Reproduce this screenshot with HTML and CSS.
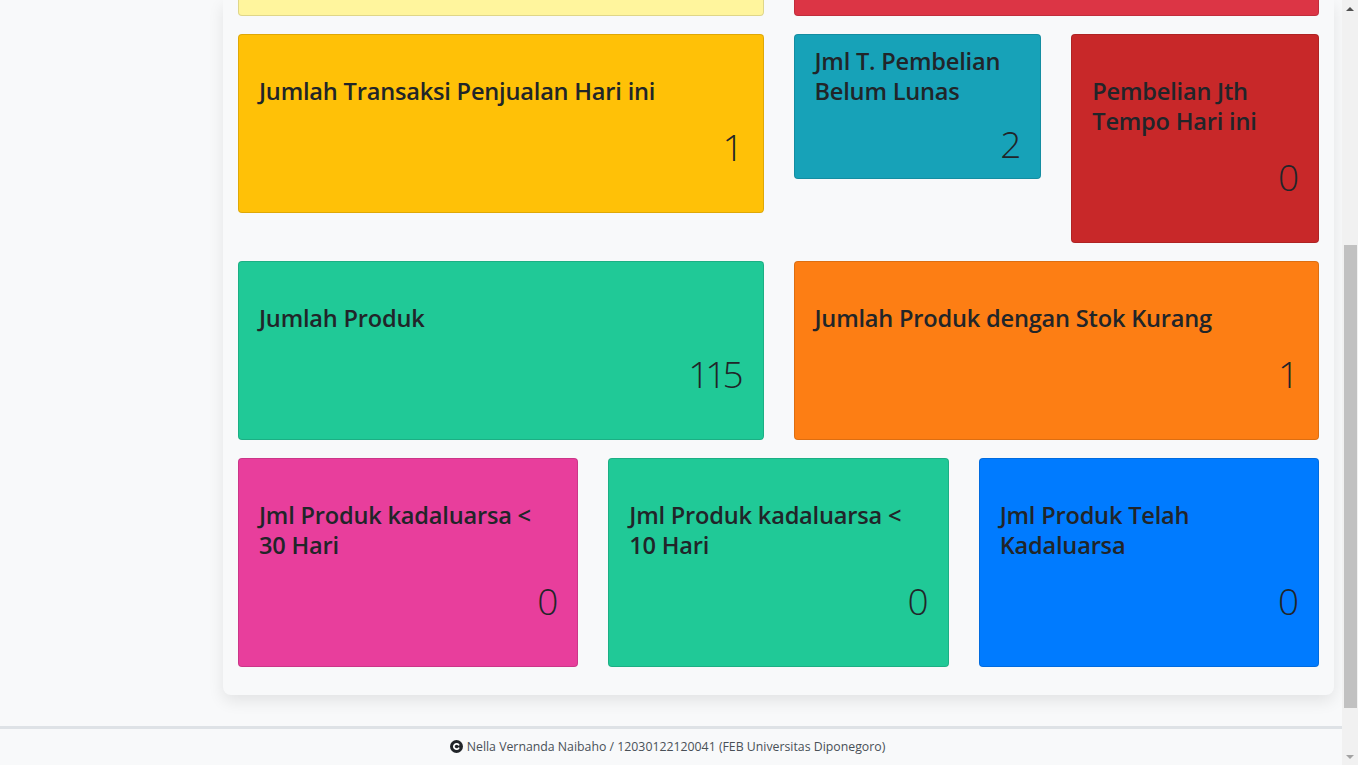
FILE: index.html
```html
<!DOCTYPE html>
<html lang="id">
<head>
<meta charset="utf-8">
<title>Dashboard</title>
<link rel="stylesheet" href="styles.css">
</head>
<body>
<div class="page">
  <div class="main">
    <div class="content">
      <aside class="sidebar"></aside>
      <section class="panel">
        <div class="row row-2">
          <div class="card stub bg-lightyellow"></div>
          <div class="card stub bg-danger"></div>
        </div>
        <div class="row row-2">
          <div class="card bg-warning">
            <h4 class="card-title">Jumlah Transaksi Penjualan Hari ini</h4>
            <div class="card-num">1</div>
          </div>
          <div class="row row-2 nested">
            <div class="card compact bg-info">
              <h4 class="card-title">Jml T. Pembelian Belum Lunas</h4>
              <div class="card-num">2</div>
            </div>
            <div class="card bg-red">
              <h4 class="card-title">Pembelian Jth Tempo Hari ini</h4>
              <div class="card-num">0</div>
            </div>
          </div>
        </div>
        <div class="row row-2">
          <div class="card bg-teal">
            <h4 class="card-title">Jumlah Produk</h4>
            <div class="card-num">115</div>
          </div>
          <div class="card bg-orange">
            <h4 class="card-title">Jumlah Produk dengan Stok Kurang</h4>
            <div class="card-num">1</div>
          </div>
        </div>
        <div class="row row-3">
          <div class="card bg-pink">
            <h4 class="card-title">Jml Produk kadaluarsa &lt; 30 Hari</h4>
            <div class="card-num">0</div>
          </div>
          <div class="card bg-teal">
            <h4 class="card-title">Jml Produk kadaluarsa &lt; 10 Hari</h4>
            <div class="card-num">0</div>
          </div>
          <div class="card bg-primary">
            <h4 class="card-title">Jml Produk Telah Kadaluarsa</h4>
            <div class="card-num">0</div>
          </div>
        </div>
      </section>
    </div>
    <footer class="footer">
      <svg class="copy-icon" width="13" height="13" viewBox="0 0 16 16" aria-hidden="true">
        <circle cx="8" cy="8" r="8" fill="#212529"/>
        <path d="M10.6 5.9 A3.3 3.3 0 1 0 10.6 10.1" fill="none" stroke="#fff" stroke-width="2.2" stroke-linecap="round"/>
      </svg>
      <span>Nella Vernanda Naibaho / 12030122120041 (FEB Universitas Diponegoro)</span>
    </footer>
  </div>
  <div class="scrollbar">
    <div class="sb-btn"><span class="tri-up"></span></div>
    <div class="sb-track"><div class="sb-thumb"></div></div>
    <div class="sb-btn"><span class="tri-down"></span></div>
  </div>
</div>
</body>
</html>
```

FILE: styles.css
```css
* { box-sizing: border-box; }
html, body { margin: 0; padding: 0; }
body {
  background: #f8f9fa;
  font-family: "Open Sans", "Noto Sans", "Liberation Sans", sans-serif;
  color: #212529;
  overflow: hidden;
}
.page {
  display: flex;
  width: 1358px;
  height: 765px;
}
.main {
  flex: 1;
  display: flex;
  flex-direction: column;
  min-width: 0;
}
.content {
  display: flex;
  align-items: flex-start;
  margin-bottom: 31px;
}
.sidebar {
  width: 223px;
  flex: none;
}
.panel {
  width: 1111px;
  flex: none;
  background: #f8f9fa;
  border-radius: 0 0 8px 8px;
  box-shadow: 0 6px 16px rgba(0, 0, 0, 0.09);
  padding: 0 15px 28px 15px;
  display: flex;
  flex-direction: column;
  gap: 18px;
}
.row {
  display: grid;
  column-gap: 30px;
  align-items: start;
}
.row-2 { grid-template-columns: 1fr 1fr; }
.row-3 { grid-template-columns: 1fr 1fr 1fr; }
.card {
  border: 1px solid rgba(0, 0, 0, 0.125);
  border-radius: 4px;
  padding: 41px 23px 41px 20px;
}
.card.stub {
  height: 16px;
  padding: 0;
  border-top: none;
  border-radius: 0 0 4px 4px;
}
.card.compact {
  padding: 11px 23px 10px 20px;
}
.card-title {
  margin: 0;
  font-size: 23.6px;
  font-weight: 600;
  line-height: 30px;
  letter-spacing: -0.2px;
}
.card-num {
  margin-top: 17px;
  text-align: right;
  font-size: 37px;
  font-weight: 300;
  line-height: 48px;
  letter-spacing: -4px;
}
.compact .card-num { margin-top: 14px; }

.bg-lightyellow { background: #fff59d; }
.bg-danger { background: #dc3545; }
.bg-warning { background: #ffc107; }
.bg-info { background: #17a2b8; }
.bg-red { background: #c82829; }
.bg-teal { background: #20c997; }
.bg-orange { background: #fd7e14; }
.bg-pink { background: #e83e9c; }
.bg-primary { background: #007bff; }

.footer {
  border-top: 3px solid #dee2e6;
  flex: 1;
  display: flex;
  align-items: center;
  justify-content: center;
  gap: 4px;
  font-size: 12.3px;
  color: #495057;
  padding: 0 7px 2px 0;
}
.copy-icon { display: block; }

.scrollbar {
  width: 16px;
  flex: none;
  background: #f1f1f1;
  display: flex;
  flex-direction: column;
}
.sb-btn {
  height: 17px;
  display: flex;
  align-items: center;
  justify-content: center;
}
.tri-up {
  width: 0; height: 0;
  border-left: 4px solid transparent;
  border-right: 4px solid transparent;
  border-bottom: 4px solid #505050;
}
.tri-down {
  width: 0; height: 0;
  border-left: 4px solid transparent;
  border-right: 4px solid transparent;
  border-top: 4px solid #a3a3a3;
}
.sb-track {
  flex: 1;
  padding-top: 228px;
}
.sb-thumb {
  height: 463px;
  margin: 0 1px 0 2px;
  background: #c1c1c1;
}
```
